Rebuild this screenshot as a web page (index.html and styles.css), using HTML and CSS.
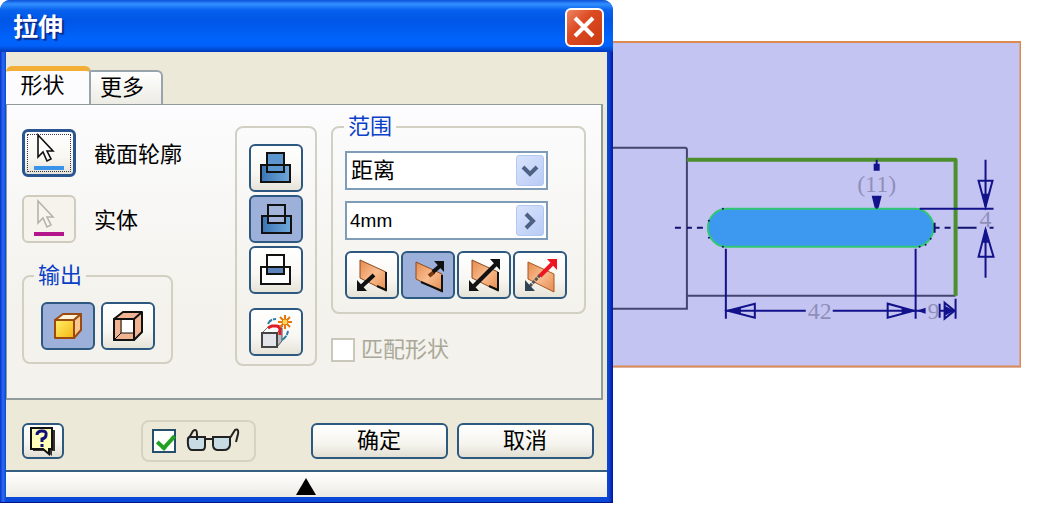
FILE: index.html
```html
<!DOCTYPE html>
<html lang="zh-CN">
<head>
    <meta charset="UTF-8">
    <meta name="viewport" content="width=device-width, initial-scale=1.0">
    <title>拉伸</title>
    <link rel="stylesheet" href="styles.css">
</head>
<body>
    <form class="dialog">
        <header class="title-bar">
            <h1>拉伸</h1>
            <button type="button" class="close-btn" aria-label="关闭">
                <svg width="24" height="24" viewBox="0 0 24 24"><path d="M3 3L21 21M21 3L3 21" stroke="#fff" stroke-width="4"/></svg>
            </button>
        </header>

        <div class="dialog-body">
            <nav class="tabs">
                <button type="button" class="tab active">形状</button>
                <button type="button" class="tab">更多</button>
            </nav>

            <div class="panel">
                <!-- selection + output -->
                <div class="col-select">
                    <div class="pick-row">
                        <button type="button" class="tool-btn focused" id="profile-btn">
                            <svg width="36" height="40" viewBox="0 0 36 40">
                                <path d="M7 2V24L12 19L16 28L20 26L16 18H22Z" fill="#fff" stroke="#111" stroke-width="1.6"/>
                                <rect x="3" y="33" width="30" height="4" fill="#3a93ea"/>
                            </svg>
                        </button>
                        <label for="profile-btn">截面轮廓</label>
                    </div>
                    <div class="pick-row">
                        <button type="button" class="tool-btn off" id="solid-btn" disabled>
                            <svg width="36" height="40" viewBox="0 0 36 40">
                                <path d="M7 2V24L12 19L16 28L20 26L16 18H22Z" fill="#f6f4ee" stroke="#b5b3aa" stroke-width="1.6"/>
                                <rect x="3" y="33" width="30" height="4" fill="#b4148c"/>
                            </svg>
                        </button>
                        <label for="solid-btn">实体</label>
                    </div>
                    <fieldset class="group output">
                        <legend>输出</legend>
                        <div class="btn-row wide">
                            <button type="button" class="tool-btn pressed" aria-label="实体输出">
                                <svg width="30" height="30" viewBox="0 0 30 30" stroke="#9c4a10" stroke-width="2" stroke-linejoin="round">
                                    <path d="M2 9L10 3H28L21 9Z" fill="#fff3d8"/>
                                    <path d="M21 9L28 3V19L21 27Z" fill="#f8c890"/>
                                    <path d="M2 9H21V27H2Z" fill="url(#gold)"/>
                                </svg>
                            </button>
                            <button type="button" class="tool-btn" aria-label="曲面输出">
                                <svg width="32" height="32" viewBox="0 0 32 32" stroke="#111" stroke-width="2" stroke-linejoin="round">
                                    <path d="M2 9L11 2H30V22L22 30H2Z" fill="#f0b493"/>
                                    <path d="M10 10H22V23H10Z" fill="#fff" stroke="none"/>
                                    <path d="M2 9H22V30H2ZM22 9L30 2" fill="none"/>
                                    <path d="M9 9V23H22M2 30L9 23" fill="none" stroke-width="1"/>
                                </svg>
                            </button>
                        </div>
                    </fieldset>
                </div>

                <!-- boolean operation -->
                <div class="col-operation">
                    <button type="button" class="tool-btn" aria-label="求并">
                        <svg width="32" height="32" viewBox="0 0 32 32" stroke="#111" stroke-width="2">
                            <path d="M1 13H30V30H1Z" fill="url(#steel)"/><path d="M7 1H24V20H7Z" fill="#5b96cf"/><path d="M7 13H24" fill="none"/>
                        </svg>
                    </button>
                    <button type="button" class="tool-btn pressed" aria-label="求差">
                        <svg width="32" height="32" viewBox="0 0 32 32" stroke="#111" stroke-width="2">
                            <path d="M2 13H31V30H2Z" fill="url(#steel)"/><path d="M8 2H25V20H8Z" fill="#a5b4da"/><path d="M8 13H25" fill="none"/>
                        </svg>
                    </button>
                    <button type="button" class="tool-btn" aria-label="求交">
                        <svg width="32" height="32" viewBox="0 0 32 32" stroke="#111" stroke-width="2">
                            <path d="M1 13H30V30H1Z" fill="#fff"/><path d="M7 1H24V20H7Z" fill="#fff"/><path d="M7 13H24V20H7Z" fill="#5b84bb"/>
                        </svg>
                    </button>
                    <button type="button" class="tool-btn new-solid" aria-label="新建实体">
                        <svg width="34" height="34" viewBox="0 0 34 34" fill="none">
                            <path d="M3 18L10 11H24L18 18Z" fill="#fff" stroke="#777"/>
                            <path d="M18 18L23 13V26L18 32Z" fill="#b9bdc4" stroke="#555"/>
                            <path d="M3 18H18V32H3Z" fill="#e2e4ea" stroke="#444" stroke-width="2"/>
                            <path d="M9 9Q11 4 17 4M23 25Q28 22 29 16" stroke="#2d7ba8" stroke-width="2" stroke-dasharray="6 1"/>
                            <path d="M9 13L13 11H17Q21 11 21 15V20" stroke="#e01c24" stroke-width="3"/>
                            <path d="M26 0V14M19 7H33M21 2L31 12M31 2L21 12" stroke="#e67808" stroke-width="2"/>
                            <circle cx="26" cy="7" r="3" fill="#ffd75c" stroke="#e67808"/>
                        </svg>
                    </button>
                </div>

                <!-- extents -->
                <div class="col-extents">
                    <fieldset class="group extents">
                        <legend>范围</legend>
                        <div class="field">
                            <select aria-label="范围类型">
                                <option>距离</option>
                            </select>
                            <span class="field-arrow">
                                <svg width="18" height="14" viewBox="0 0 18 14"><path d="M2 3L9 10L16 3" fill="none" stroke="#4d6185" stroke-width="4"/></svg>
                            </span>
                        </div>
                        <div class="field">
                            <input type="text" value="4mm" aria-label="距离值">
                            <button type="button" class="field-arrow" aria-label="更多选项">
                                <svg width="14" height="18" viewBox="0 0 14 18"><path d="M3 2L10 9L3 16" fill="none" stroke="#4d6185" stroke-width="4"/></svg>
                            </button>
                        </div>
                        <div class="btn-row">
                            <button type="button" class="tool-btn" aria-label="方向 1">
                                <svg width="34" height="36" viewBox="0 0 34 36">
                                    <path d="M5 3L31 15V34L5 21Z" fill="url(#copper)" stroke="#8a4a20"/>
                                    <path d="M31 15V33L22 29" fill="none" stroke="#111" stroke-width="2"/>
                                    <path d="M19 18L7 29" stroke="#111" stroke-width="4"/><path d="M2 34V23L12 34Z" fill="#111"/>
                                </svg>
                            </button>
                            <button type="button" class="tool-btn pressed" aria-label="方向 2">
                                <svg width="34" height="36" viewBox="0 0 34 36">
                                    <path d="M5 5L31 17V35L5 22Z" fill="url(#copper)" stroke="#8a4a20"/>
                                    <path d="M31 18V34L10 25" fill="none" stroke="#111" stroke-width="2"/>
                                    <path d="M18 19L23 15" stroke="#7a3910" stroke-width="4"/>
                                    <path d="M22 15L30 8" stroke="#111" stroke-width="4"/><path d="M33 4V15L23 4Z" fill="#111"/>
                                </svg>
                            </button>
                            <button type="button" class="tool-btn" aria-label="对称">
                                <svg width="34" height="36" viewBox="0 0 34 36">
                                    <path d="M5 3L31 15V34L5 21Z" fill="url(#copper)" stroke="#8a4a20"/>
                                    <path d="M31 15V33L22 29" fill="none" stroke="#111" stroke-width="2"/>
                                    <path d="M7 29L29 7" stroke="#111" stroke-width="4"/><path d="M2 34V23L12 34ZM33 2V13L23 2Z" fill="#111"/>
                                </svg>
                            </button>
                            <button type="button" class="tool-btn" aria-label="不对称">
                                <svg width="34" height="36" viewBox="0 0 34 36">
                                    <path d="M5 5L31 17V35L5 22Z" fill="url(#copper)" stroke="#a95722"/>
                                    <path d="M17 18L7 29" stroke="#555" stroke-width="3" stroke-dasharray="3 1"/><path d="M2 34V23L12 34Z" fill="#2f4352"/>
                                    <path d="M17 19L29 7" stroke="#ee1520" stroke-width="4"/><path d="M34 2V13L24 2Z" fill="#ee1520"/>
                                </svg>
                            </button>
                        </div>
                    </fieldset>
                    <label class="match-shape">
                        <input type="checkbox" class="check" disabled>
                        <span>匹配形状</span>
                    </label>
                </div>
            </div>

            <footer class="actions">
                <button type="button" class="push-btn help-btn" aria-label="帮助">
                    <svg width="28" height="30" viewBox="0 0 28 30">
                        <path d="M4 4H26V25H23V30L17 25H4Z" fill="#333"/>
                        <path d="M2 2H23V23H20V28L14 23H2Z" fill="#ffffb9" stroke="#111" stroke-width="2"/>
                        <path d="M8 9Q8 5 13 5Q18 5 17 9Q17 12 13 13V16M13 18V21" fill="none" stroke="#10107c" stroke-width="3"/>
                    </svg>
                </button>
                <label class="preview">
                    <input type="checkbox" class="check" checked aria-label="预览">
                    <svg width="54" height="26" viewBox="0 0 54 26" fill="none" stroke="#222" stroke-width="2">
                        <path d="M2 10Q1 22 6 22H16Q19 22 19 18V9H4Q2 9 2 11Z" fill="#c6dbe3"/>
                        <path d="M27 9H44V17Q43 22 38 22H31Q27 21 27 17Z" fill="#c6dbe3"/>
                        <path d="M19 11H27M3 10L7 3Q11 0 11 6V12M44 10L49 2Q53 0 52 6L50 14"/>
                    </svg>
                </label>
                <div class="confirm">
                    <button type="submit" class="push-btn">确定</button>
                    <button type="button" class="push-btn">取消</button>
                </div>
            </footer>
        </div>

        <button type="button" class="expander" aria-label="收起">
            <svg width="20" height="18" viewBox="0 0 20 18"><path d="M10 0L20 17H0Z" fill="#000"/></svg>
        </button>
    </form>

    <main class="viewport">
        <svg class="sketch" viewBox="612 41 409 327" fill="none">
            <defs>
                <linearGradient id="gold" x1="0" y1="0" x2="1" y2="1"><stop offset="0" stop-color="#fff06a"/><stop offset="1" stop-color="#f5b612"/></linearGradient>
                <linearGradient id="steel"><stop offset="0" stop-color="#3b74b4"/><stop offset="1" stop-color="#6fa9da"/></linearGradient>
                <linearGradient id="copper" x1="0" y1="0" x2="1" y2="1"><stop offset="0" stop-color="#e58a4c"/><stop offset="0.5" stop-color="#f9bd90"/><stop offset="1" stop-color="#e58a4c"/></linearGradient>
            </defs>
            <rect x="600" y="41" width="421" height="327" fill="#c4c4f3"/>
            <path d="M612 42H1020V367H612" stroke="#dd8a50" stroke-width="2"/>

            <!-- shaft outline -->
            <path d="M612 148H684Q686 148 686 150V309H612M686 296H955" stroke="#44446f" stroke-width="2"/>
            <path d="M686 160H955V296" stroke="#4c8f2c" stroke-width="4" stroke-linejoin="round"/>

            <!-- centre line and keyway -->
            <path d="M674 228H680M686 228H691M696 228H702M944 228H950M957 228H976M989 228H993" stroke="#12126e" stroke-width="2"/>
            <rect x="707" y="209" width="226" height="38" rx="19" fill="#3d98f0" stroke="#32c873" stroke-width="2"/>
            <path d="M933 228H939M934 223V233" stroke="#12126e" stroke-width="2"/>
            <g fill="#12126e">
                <circle cx="722" cy="209" r="1"/><circle cx="708" cy="221" r="1"/><circle cx="708" cy="238" r="1"/><circle cx="722" cy="247" r="1"/>
                <circle cx="930" cy="239" r="1"/><circle cx="925" cy="245" r="1"/><circle cx="919" cy="247" r="1"/>
            </g>

            <!-- dimensions -->
            <g stroke="#12128a" stroke-width="2">
                <path d="M725 249V319M915 249V319M955 299V319"/>
                <path d="M725 311H805M832 311H924"/>
                <path d="M727 311L754 304V318ZM913 311L887 304V318Z"/>
                <path d="M919 209H993M985 160V207M985 230V278"/>
                <path d="M985 207L978 181H992ZM985 230L978 257H993Z"/>
                <path d="M876 160V170M876 198V209"/>
                <path d="M938 311H955M939 304V318M944 303L954 311L944 319Z"/>
            </g>
            <path d="M873 164H879V171H873ZM871 196H881L878 208H874ZM728 311L740 308V314ZM912 311L901 308V314ZM916 311L925 308V314ZM985 205L982 194H988ZM985 231L982 243H988ZM954 311L944 306V316Z" fill="#12128a"/>
            <g class="dim-text" text-anchor="middle">
                <text x="876" y="192">(11)</text>
                <text x="819" y="319">42</text>
                <text x="933" y="319">9</text>
                <text x="985" y="227">4</text>
            </g>
        </svg>
    </main>
</body>
</html>
```
FILE: styles.css
```css
* {
    box-sizing: border-box;
}

body {
    margin: 0;
    display: grid;
    grid-template-columns: 7fr 5fr;
    align-items: start;
    background: #fff;
    font-family: "Liberation Sans", "Noto Sans CJK SC", sans-serif;
    font-size: 22px;
    line-height: 24px;
    color: #000;
}

button,
input,
select {
    font: inherit;
    color: inherit;
    margin: 0;
    padding: 0;
}

svg {
    display: block;
    flex: none;
}

/* dialog window */
.dialog {
    padding: 0 6px 5px;
    background: linear-gradient(90deg, #0831c8, #2a6cf0 3px, #0a48d8 6px, #0a48d8 calc(100% - 6px), #1040d0 calc(100% - 4px), #001a9c);
    border-bottom: 1px solid #00158c;
    border-radius: 10px 10px 0 0;
    overflow: hidden;
}

.title-bar {
    display: flex;
    align-items: center;
    justify-content: space-between;
    height: 52px;
    margin: 0 -6px;
    padding: 2px 9px 0 13px;
    background: linear-gradient(#0a50d8, #3390ff 4px, #0862ee 10px, #0056e6 20px, #0064fc 40px, #0060f8 46px, #0038b8);
}

.title-bar h1 {
    margin: 0;
    font-size: 25px;
    font-weight: bold;
    color: #fff;
    text-shadow: 2px 2px 1px #0a2a8c;
}

.close-btn {
    display: flex;
    align-items: center;
    justify-content: center;
    width: 39px;
    height: 39px;
    border: 2px solid #fff;
    border-radius: 6px;
    background: linear-gradient(135deg, #ee8564, #dc4a22 40%, #c93b12);
}

.dialog-body {
    background: #ece9d8;
    padding-top: 14px;
}

/* tabs */
.tabs {
    display: flex;
    align-items: flex-end;
}

.tab {
    width: 72px;
    height: 34px;
    padding-right: 8px;
    border: 2px solid #98a4ab;
    border-left-width: 0;
    border-bottom: 0;
    border-radius: 0 6px 0 0;
    background: linear-gradient(#fff, #ecebe4);
}

.tab.active {
    width: 85px;
    height: 38px;
    padding: 0 10px 4px 0;
    border: 0;
    border-top: 5px solid #f2ae35;
    border-right: 2px solid #98a4ab;
    border-radius: 6px 6px 0 0;
    background: #fcfcfe;
}

.panel {
    display: flex;
    align-items: flex-start;
    margin-right: 4px;
    padding: 10px 15px 32px;
    border: 1px solid #919b9c;
    border-width: 1px 2px 2px 1px;
    background: linear-gradient(#fcfcfe, #f3f2ec 70%);
}

.tool-btn {
    display: flex;
    align-items: center;
    justify-content: center;
    width: 54px;
    height: 48px;
    flex: none;
    border: 2px solid #2d5980;
    border-radius: 6px;
    background: linear-gradient(#fff, #f8f7f2 60%, #e6e3d8);
}

.tool-btn.pressed {
    background: #9cb0da;
}

.tool-btn.focused {
    border-width: 3px;
    border-color: #2a5590;
    outline: 1px dotted #334;
    outline-offset: -6px;
}

.tool-btn.off {
    border-color: #cfccbe;
    background: #f5f3eb;
}

.col-select {
    flex: none;
    width: 213px;
    padding-top: 14px;
}

.pick-row {
    display: flex;
    align-items: center;
    gap: 18px;
    margin-bottom: 18px;
}

.pick-row label {
    padding-top: 4px;
}

.group {
    min-width: 0;
    margin: 0;
    border: 2px solid #d2d0c3;
    border-radius: 8px;
}

.group legend {
    padding: 0 4px;
    color: #0a3fc8;
}

.output {
    width: 151px;
    margin-top: 21px;
    padding: 14px 17px 12px;
}

.output legend {
    margin-left: -7px;
}

.btn-row {
    display: flex;
    gap: 2px;
}

.btn-row.wide {
    gap: 6px;
}

.col-operation {
    display: flex;
    flex-direction: column;
    gap: 3px;
    flex: none;
    margin-top: 11px;
    margin-right: 14px;
    padding: 16px 12px 8px;
    border: 2px solid #d2d0c3;
    border-radius: 8px;
}

.new-solid {
    margin-top: 11px;
}

.col-extents {
    flex: 1;
}

.extents {
    padding: 12px 12px 13px;
}

.extents legend {
    margin-left: -1px;
}

.field {
    position: relative;
    max-width: 203px;
    height: 39px;
    margin-bottom: 11px;
}

.field select,
.field input {
    appearance: none;
    display: block;
    width: 100%;
    height: 100%;
    padding: 0 36px 0 4px;
    border: 2px solid #7f9db9;
    border-radius: 0;
    background: #fff;
}

.field input {
    padding-left: 3px;
    font-size: 19px;
}

/* arrow sits over the right end of the field */
.field-arrow {
    position: absolute;
    top: 4px;
    right: 4px;
    bottom: 4px;
    width: 28px;
    display: flex;
    align-items: center;
    justify-content: center;
    border: 1px solid #b4c8f4;
    border-radius: 3px;
    background: linear-gradient(135deg, #d8e3fd, #b9cbf5);
    pointer-events: none;
}

button.field-arrow {
    pointer-events: auto;
}

.match-shape {
    display: flex;
    align-items: center;
    gap: 6px;
    margin-top: 24px;
    color: #aaa899;
}

.check {
    appearance: none;
    flex: none;
    width: 24px;
    height: 24px;
    border: 2px solid #24506e;
    background: #fff;
}

.check:disabled {
    border-color: #cac8bb;
}

.check:checked::before {
    content: "";
    display: block;
    width: 14px;
    height: 7px;
    margin: 4px 3px;
    border-left: 4px solid #21a121;
    border-bottom: 4px solid #21a121;
    transform: rotate(-48deg);
}

/* bottom buttons */
.actions {
    display: flex;
    align-items: center;
    padding: 20px 13px 8px 16px;
}

.push-btn {
    width: 137px;
    height: 36px;
    border: 2px solid #2d5980;
    border-radius: 6px;
    background: linear-gradient(#fff, #f5f4ee 60%, #e2dfd3);
}

.help-btn {
    display: flex;
    align-items: center;
    justify-content: center;
    width: 42px;
}

.preview {
    display: flex;
    align-items: center;
    gap: 10px;
    margin-left: 77px;
    padding: 6px 14px 6px 9px;
    border: 2px solid #d6d3c3;
    border-radius: 8px;
}

.confirm {
    display: flex;
    gap: 9px;
    margin-left: auto;
}

.expander {
    display: flex;
    align-items: center;
    justify-content: center;
    width: 100%;
    height: 27px;
    padding-top: 4px;
    border: 0;
    border-top: 2px solid #355f80;
    background: linear-gradient(#fff, #ecebe4);
}

/* model view */
.viewport {
    padding: 41px 29px 0 0;
}

.sketch {
    width: 100%;
    height: auto;
}

.dim-text {
    font-family: "Liberation Serif", serif;
    font-size: 24px;
    fill: #8f8fb8;
}
```
